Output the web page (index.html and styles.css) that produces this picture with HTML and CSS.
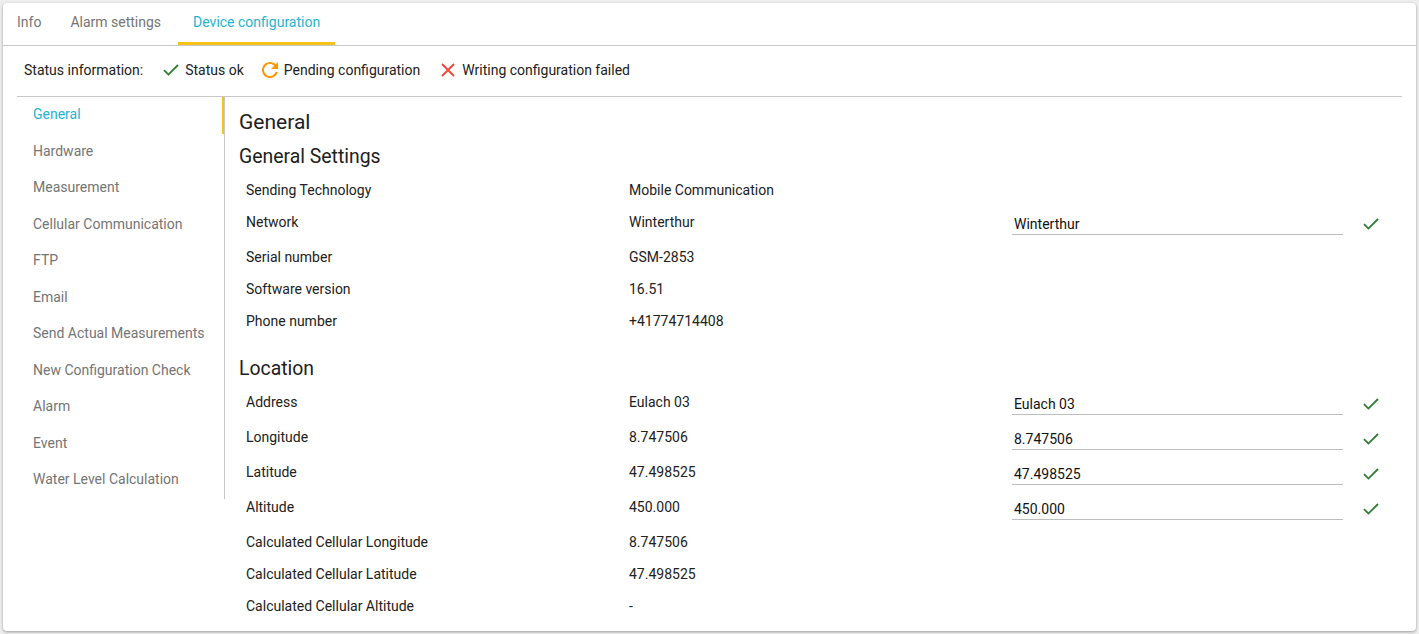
FILE: index.html
```html
<!DOCTYPE html>
<html lang="en">
<head>
<meta charset="utf-8">
<title>Device configuration</title>
<link rel="stylesheet" href="styles.css">
</head>
<body>
<div class="card">
  <div class="tabs">
    <div class="tab tab-info">Info</div>
    <div class="tab tab-alarm">Alarm settings</div>
    <div class="tab active">Device configuration</div>
  </div>
  <div class="section">
    <div class="status">
      <span class="status-label">Status information:</span>
      <span class="status-item first">
        <svg class="ic-check" width="16" height="12" viewBox="0 0 16 12"><polyline points="1,6.2 5.4,10.6 15,1" fill="none" stroke="#2e7d32" stroke-width="1.8"/></svg>
        Status ok
      </span>
      <span class="status-item">
        <svg width="16" height="16" viewBox="4 4 16 16"><path fill="#ff9800" d="M17.65 6.35C16.2 4.9 14.21 4 12 4c-4.420 0-7.99 3.58-7.99 8s3.57 8 7.99 8c3.73 0 6.84-2.55 7.73-6h-2.08c-.82 2.33-3.04 4-5.65 4-3.31 0-6-2.69-6-6s2.690-6 6-6c1.66 0 3.14.69 4.22 1.78L13 11h7V4l-2.35 2.35z"/></svg>
        Pending configuration
      </span>
      <span class="status-item last">
        <svg width="14" height="14" viewBox="0 0 14 14"><path d="M1 1L13 13M13 1L1 13" stroke="#f44336" stroke-width="1.8" fill="none"/></svg>
        Writing configuration failed
      </span>
    </div>
    <div class="body">
      <nav class="nav">
        <a class="nav-item active">General</a>
        <a class="nav-item">Hardware</a>
        <a class="nav-item">Measurement</a>
        <a class="nav-item">Cellular Communication</a>
        <a class="nav-item">FTP</a>
        <a class="nav-item">Email</a>
        <a class="nav-item">Send Actual Measurements</a>
        <a class="nav-item">New Configuration Check</a>
        <a class="nav-item">Alarm</a>
        <a class="nav-item">Event</a>
        <a class="nav-item">Water Level Calculation</a>
      </nav>
      <main class="content">
        <h1 class="title">General</h1>
        <h2 class="subtitle">General Settings</h2>
        <div class="row"><div class="cell">Sending Technology</div><div class="cell">Mobile Communication</div></div>
        <div class="row input-row"><div class="cell">Network</div><div class="cell">Winterthur</div><div class="cell"><div class="input">Winterthur</div></div><div class="cell"><svg class="ok" width="16" height="12" viewBox="0 0 16 12"><polyline points="1,6.2 5.4,10.6 15,1" fill="none" stroke="#2e7d32" stroke-width="1.8"/></svg></div></div>
        <div class="row"><div class="cell">Serial number</div><div class="cell">GSM-2853</div></div>
        <div class="row"><div class="cell">Software version</div><div class="cell">16.51</div></div>
        <div class="row"><div class="cell">Phone number</div><div class="cell">+41774714408</div></div>

        <h2 class="subtitle loc">Location</h2>
        <div class="row input-row"><div class="cell">Address</div><div class="cell">Eulach 03</div><div class="cell"><div class="input">Eulach 03</div></div><div class="cell"><svg class="ok" width="16" height="12" viewBox="0 0 16 12"><polyline points="1,6.2 5.4,10.6 15,1" fill="none" stroke="#2e7d32" stroke-width="1.8"/></svg></div></div>
        <div class="row input-row"><div class="cell">Longitude</div><div class="cell">8.747506</div><div class="cell"><div class="input">8.747506</div></div><div class="cell"><svg class="ok" width="16" height="12" viewBox="0 0 16 12"><polyline points="1,6.2 5.4,10.6 15,1" fill="none" stroke="#2e7d32" stroke-width="1.8"/></svg></div></div>
        <div class="row input-row"><div class="cell">Latitude</div><div class="cell">47.498525</div><div class="cell"><div class="input">47.498525</div></div><div class="cell"><svg class="ok" width="16" height="12" viewBox="0 0 16 12"><polyline points="1,6.2 5.4,10.6 15,1" fill="none" stroke="#2e7d32" stroke-width="1.8"/></svg></div></div>
        <div class="row input-row"><div class="cell">Altitude</div><div class="cell">450.000</div><div class="cell"><div class="input">450.000</div></div><div class="cell"><svg class="ok" width="16" height="12" viewBox="0 0 16 12"><polyline points="1,6.2 5.4,10.6 15,1" fill="none" stroke="#2e7d32" stroke-width="1.8"/></svg></div></div>
        <div class="row"><div class="cell">Calculated Cellular Longitude</div><div class="cell">8.747506</div></div>
        <div class="row"><div class="cell">Calculated Cellular Latitude</div><div class="cell">47.498525</div></div>
        <div class="row"><div class="cell">Calculated Cellular Altitude</div><div class="cell">-</div></div>
      </main>
    </div>
  </div>
</div>
</body>
</html>
```
FILE: styles.css
```css
* { box-sizing: border-box; }
html, body { margin: 0; }
body {
  background: #eeeeee;
  padding: 3px;
  font-family: Roboto, "Liberation Sans", sans-serif;
  font-size: 14px;
  color: #212121;
}
.card {
  background: #fff;
  border-radius: 4px;
  box-shadow: 0 1px 3px rgba(0,0,0,0.35);
  height: 628px;
  overflow: hidden;
}
.tabs {
  display: flex;
  border-bottom: 1px solid #c8c8c8;
  height: 43px;
}
.tab {
  padding: 0 15px;
  height: 42px;
  line-height: 39px;
  color: #757575;
  border-bottom: 3px solid transparent;
}
.tab-info { padding: 0 14px; }
.tab-alarm { padding: 0 17px 0 15px; }
.tab.active {
  color: #26b4d2;
  border-bottom-color: #f9c21b;
}
.section { padding: 0 14px; }
.status {
  display: flex;
  align-items: center;
  height: 51px;
  padding: 0 0 2px 7px;
  border-bottom: 1px solid #c8c8c8;
}
.status-item {
  display: flex;
  align-items: center;
  gap: 6px;
  margin-left: 18px;
}
.status-item.first { margin-left: 20px; }
.status-item.last { gap: 7px; margin-left: 21px; }
.body { display: flex; }
.nav {
  width: 208px;
  border-right: 1px solid #c8c8c8;
  align-self: flex-start;
}
.nav-item {
  display: block;
  height: 36.5px;
  line-height: 34px;
  padding-left: 16px;
  color: #757575;
}
.nav-item.active {
  color: #26b4d2;
  box-shadow: inset -2px 0 0 #f9c21b;
}
.content {
  flex: 1;
  padding-left: 14px;
}
.title {
  font-size: 21px;
  font-weight: 400;
  line-height: 28px;
  margin: 11px 0 0;
}
.subtitle {
  font-size: 19.4px;
  font-weight: 400;
  line-height: 26px;
  margin: 8px 0 4px;
}
.subtitle.loc { margin-top: 19px; }
.row {
  display: grid;
  grid-template-columns: 383px 383px 331px 1fr;
  padding-left: 7px;
  align-items: start;
}
.cell {
  padding: 8px 0;
  line-height: 16px;
}
.input-row .cell { padding-bottom: 6px; }
.input {
  padding: 2px;
  line-height: 16px;
  border-bottom: 1px solid #bdbdbd;
  color: #111;
}
.ok { display: block; margin: 4px 0 0 20px; }
```
